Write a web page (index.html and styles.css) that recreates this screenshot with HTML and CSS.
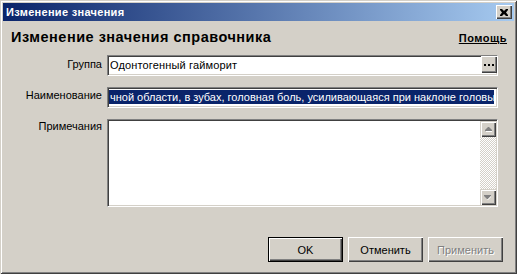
FILE: index.html
```html
<!DOCTYPE html>
<html>
<head>
<meta charset="utf-8">
<link rel="stylesheet" href="styles.css">
</head>
<body>
<div class="window">
  <div class="titlebar">
    <span class="title">Изменение значения</span>
    <span class="close-btn">
      <svg width="8" height="7" viewBox="0 0 8 7"><path d="M0 0h2l2 2 2-2h2v1l-2 2.5 2 2.5v1h-2l-2-2-2 2h-2v-1l2-2.5-2-2.5z" fill="#000"/></svg>
    </span>
  </div>
  <div class="header">
    <span class="header-title">Изменение значения справочника</span>
    <span class="help">Помощь</span>
  </div>
  <div class="form">
    <label class="lbl lbl-1">Группа</label>
    <div class="field">
      <span class="field-text">Одонтогенный гайморит</span>
      <span class="ellipsis"><i></i><i></i><i></i></span>
    </div>
    <label class="lbl lbl-2">Наименование</label>
    <div class="field">
      <span class="selection">чной области, в зубах, головная боль, усиливающаяся при наклоне головы</span>
    </div>
    <label class="lbl lbl-3">Примечания</label>
    <div class="field memo">
      <div class="memo-body"></div>
      <div class="scrollbar">
        <span class="sb-btn"><svg width="7" height="5" viewBox="0 0 7 5"><path d="M3 0h1l3 3v1h-7v-1z" fill="#808080"/><path d="M1 4h7v1h-7z" fill="#fff"/></svg></span>
        <span class="sb-track"></span>
        <span class="sb-btn"><svg width="8" height="5" viewBox="0 0 8 5"><path d="M0 0h7v1l-3 3h-1l-3-3z" fill="#808080"/><path d="M7 1v1l-3 3h-1z" fill="#fff"/></svg></span>
      </div>
    </div>
  </div>
  <div class="buttons">
    <button class="btn btn-default">OK</button>
    <button class="btn">Отменить</button>
    <button class="btn btn-disabled">Применить</button>
  </div>
</div>
</body>
</html>
```

FILE: styles.css
```css
html, body {
  margin: 0;
  padding: 0;
  background: #D4D0C8;
}

.window {
  width: 517px;
  height: 274px;
  box-sizing: border-box;
  padding: 3px;
  background: #D4D0C8;
  box-shadow: inset 1px 1px #D4D0C8, inset -1px -1px #404040, inset 2px 2px #FFFFFF, inset -2px -2px #808080;
  font-family: "Liberation Sans", Arial, sans-serif;
  font-size: 11px;
  color: #000;
  display: flex;
  flex-direction: column;
}

.titlebar {
  height: 18px;
  display: flex;
  align-items: center;
  justify-content: space-between;
  background: linear-gradient(to right, #0A246A, #A6CAF0);
  padding: 0 2px 0 2px;
}

.title {
  color: #FFF;
  font-weight: bold;
  font-size: 11px;
  letter-spacing: 0.3px;
  padding-left: 1px;
}

.close-btn {
  width: 16px;
  height: 14px;
  box-sizing: border-box;
  background: #D4D0C8;
  box-shadow: inset 1px 1px #FFFFFF, inset -1px -1px #404040, inset -2px -2px #808080;
  display: flex;
  align-items: center;
  justify-content: center;
  padding-right: 1px;
}

.header {
  margin-top: 8px;
  display: flex;
  justify-content: space-between;
  align-items: baseline;
  padding: 0 7px 0 8px;
  line-height: 17px;
}

.header-title {
  font-weight: bold;
  font-size: 14.5px;
  letter-spacing: 0.5px;
}

.help {
  font-weight: bold;
  font-size: 11px;
  text-decoration: underline;
  letter-spacing: 0.5px;
}

.form {
  margin-top: 8px;
  display: grid;
  grid-template-columns: 96px 391px;
  grid-template-rows: 21px 21px 88px;
  column-gap: 5px;
  row-gap: 11px;
  padding-left: 3px;
}

.lbl {
  text-align: right;
  line-height: 13px;
}
.lbl-1 { padding-top: 3px; }
.lbl-2 { padding-top: 2px; }
.lbl-3 { padding-top: 1px; }

.field {
  box-sizing: border-box;
  background: #FFF;
  border: 1px solid;
  border-color: #808080 #FFFFFF #FFFFFF #808080;
  box-shadow: inset 1px 1px #404040, inset -1px -1px #D4D0C8;
  padding: 1px;
  display: flex;
  align-items: flex-start;
  overflow: hidden;
}

.field-text {
  flex: 1;
  line-height: 14px;
  padding: 1px 0 0 1px;
  white-space: nowrap;
  letter-spacing: 0.15px;
}

.ellipsis {
  width: 16px;
  height: 17px;
  margin-top: -1px;
  margin-right: -1px;
  box-sizing: border-box;
  background: #D4D0C8;
  box-shadow: inset 1px 1px #FFFFFF, inset -1px -1px #404040, inset -2px -2px #808080;
  display: flex;
  align-items: center;
  justify-content: center;
  gap: 2px;
  padding-top: 1px;
}
.ellipsis i {
  width: 2px;
  height: 2px;
  background: #000;
}

.selection {
  width: 385px;
  margin-top: 1px;
  background: #0A246A;
  color: #FFF;
  line-height: 14px;
  padding-left: 1px;
  box-sizing: border-box;
  white-space: nowrap;
  overflow: hidden;
}

.memo {
  align-items: stretch;
  padding: 1px;
}
.memo-body {
  flex: 1;
}
.scrollbar {
  width: 16px;
  display: flex;
  flex-direction: column;
}
.sb-btn {
  height: 16px;
  box-sizing: border-box;
  background: #D4D0C8;
  box-shadow: inset 1px 1px #D4D0C8, inset 2px 2px #FFFFFF, inset -1px -1px #404040, inset -2px -2px #808080;
  display: flex;
  align-items: center;
  justify-content: center;
}
.sb-track {
  flex: 1;
  background: repeating-conic-gradient(#FFFFFF 0 25%, #D4D0C8 0 50%) 0 0 / 2px 2px;
}

.buttons {
  margin-top: 30px;
  display: flex;
  justify-content: flex-end;
  gap: 5px;
  padding-right: 11px;
}

.btn {
  width: 75px;
  height: 25px;
  box-sizing: border-box;
  margin: 0;
  padding: 0;
  font-family: "Liberation Sans", Arial, sans-serif;
  font-size: 11px;
  color: #000;
  background: #D4D0C8;
  border: none;
  box-shadow: inset 1px 1px #FFFFFF, inset -1px -1px #404040, inset -2px -2px #808080;
}

.btn-default {
  border: 1px solid #000;
}

.btn-disabled {
  color: #808080;
  text-shadow: 1px 1px #FFFFFF;
}
```
